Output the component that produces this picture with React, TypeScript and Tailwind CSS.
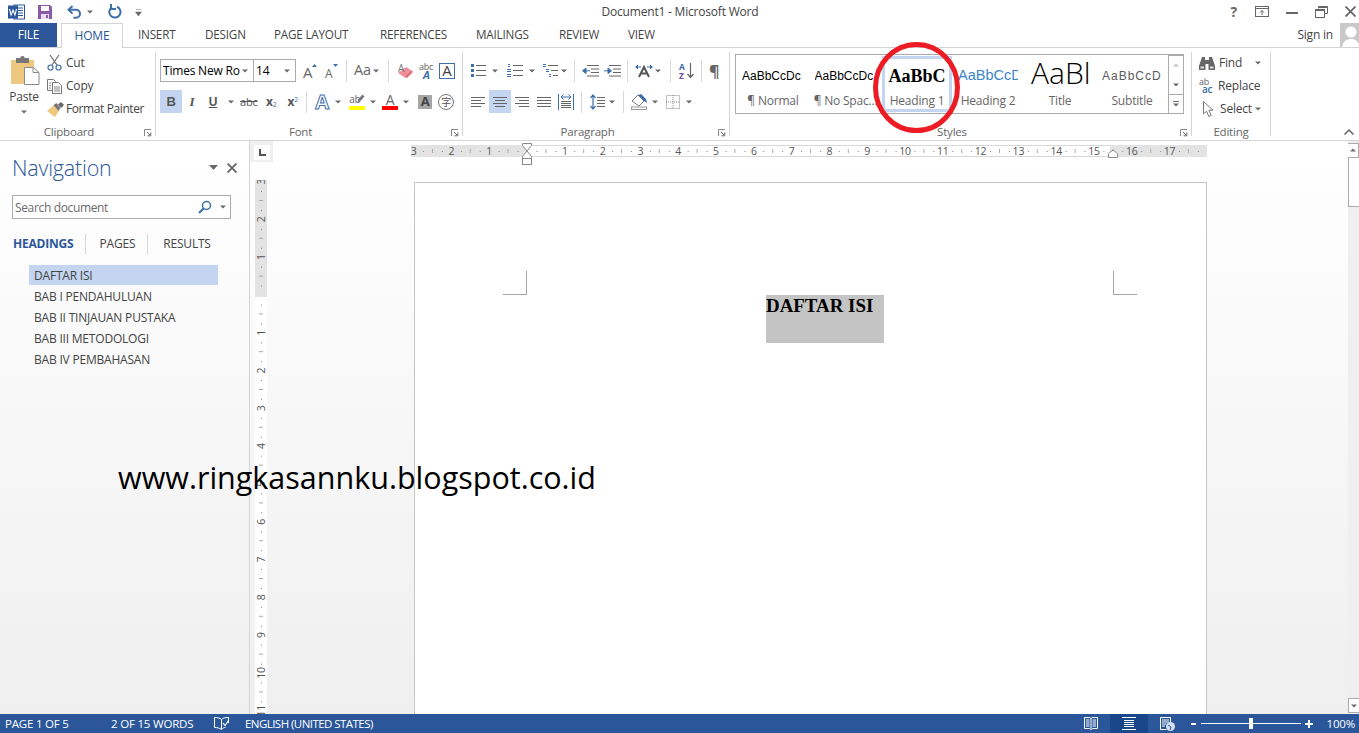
import React, { FC } from 'react';

const BLUE = '#2b579a';
const ICON = '#3e6fa8';
const GRAY = '#6a6a6a';

const Dd: FC<{ className?: string; color?: string }> = ({ className = '', color = GRAY }) => (
  <svg width="6" height="4" viewBox="0 0 6 4" className={`shrink-0 ${className}`}>
    <path d="M0 0.5h6L3 3.5z" fill={color} />
  </svg>
);

// little icon made of horizontal strokes: [x1, x2, y, colour?]
const Bars: FC<{ w: number; h: number; rows: (number | string)[][]; className?: string }> = ({ w, h, rows, className = '' }) => (
  <svg width={w} height={h} viewBox={`0 0 ${w} ${h}`} className={`shrink-0 ${className}`}>
    {rows.map((r, i) => (
      <line key={i} x1={r[0]} x2={r[1]} y1={Number(r[2]) + 0.5} y2={Number(r[2]) + 0.5} stroke={(r[3] as string) || '#666'} />
    ))}
  </svg>
);

const Launcher = () => (
  <svg width="8" height="8" viewBox="0 0 8 8" className="shrink-0">
    <path d="M0.5 7V0.5H7" fill="none" stroke="#8a8a8a" />
    <path d="M3 3l3 3M6.8 3.5v3.3H3.5" fill="none" stroke="#666" />
  </svg>
);

const Sep: FC<{ className?: string }> = ({ className = '' }) => <div className={`w-px h-[22px] bg-[#d8d8d8] shrink-0 ${className}`} />;

const Group: FC<{ label: string; className: string; children: React.ReactNode; launcher?: boolean }> = ({ label, className, children, launcher = true }) => (
  <div className={`flex flex-col h-[84px] border-r border-[#d4d4d4] shrink-0 ${className}`}>
    <div className="flex-1 min-h-0">{children}</div>
    <div className="h-[12px] -mb-[2px] flex items-center relative">
      <span className={`flex-1 text-center text-[#666] text-[11.5px] leading-[12px] ${launcher ? 'pr-[17px]' : ''}`}>{label}</span>
      {launcher && (
        <span className="absolute right-[3px] top-[3px]">
          <Launcher />
        </span>
      )}
    </div>
  </div>
);

const WordLogo = () => (
  <svg width="17" height="16" viewBox="0 0 17 16" className="shrink-0">
    <rect x="6" y="1" width="10.5" height="14" fill="#fff" stroke={BLUE} />
    <path d="M9 4h6M9 6.5h6M9 9h6M9 11.5h6" stroke={BLUE} />
    <rect x="0" y="1.5" width="10" height="13" fill={BLUE} />
    <path d="M1.5 5l1.6 6 1.9-5 1.9 5 1.6-6" fill="none" stroke="#fff" strokeWidth="1.1" />
  </svg>
);

const SaveIcon = () => (
  <svg width="14" height="14" viewBox="0 0 14 14" className="shrink-0">
    <path d="M0 0h12l2 2v12H0z" fill="#8a5aa8" />
    <rect x="3" y="1" width="8" height="5" fill="#fff" />
    <rect x="3" y="9" width="8" height="5" fill="#e9dff0" />
    <rect x="8" y="10" width="2" height="3" fill="#8a5aa8" />
  </svg>
);

const Undo = () => (
  <svg width="15" height="14" viewBox="0 0 15 14" className="shrink-0">
    <path d="M5.5 1L1.5 4.8l4 3.8" fill="none" stroke={ICON} strokeWidth="2" />
    <path d="M2 4.8h7a4 4 0 0 1 0 8H6.5" fill="none" stroke={ICON} strokeWidth="2" />
  </svg>
);

const Redo = () => (
  <svg width="14" height="15" viewBox="0 0 14 15" className="shrink-0">
    <path d="M4 3.2a5.6 5.6 0 1 0 5-0.4" fill="none" stroke={ICON} strokeWidth="2" />
    <path d="M3 0v5h5" fill="none" stroke={ICON} strokeWidth="2" />
  </svg>
);

const PasteIcon = () => (
  <svg width="29" height="29" viewBox="0 0 29 29" className="shrink-0 ml-[2px]">
    <rect x="0" y="4" width="23" height="24" rx="1" fill="#edc87e" />
    <rect x="5" y="2" width="13" height="5" fill="#777" />
    <rect x="9.500" y="0" width="4" height="4" rx="1.500" fill="#777" />
    <path d="M13.500 11.500h9l5.500 5v12h-14.500z" fill="#fff" stroke="#8a8a8a" />
    <path d="M22 11.500v5h6" fill="none" stroke="#8a8a8a" />
  </svg>
);

const CutIcon = () => (
  <svg width="15" height="16" viewBox="0 0 15 16" className="shrink-0">
    <path d="M3 0l7 10M12 0L5 10" stroke="#777" strokeWidth="1.300" fill="none" />
    <circle cx="3.500" cy="12.500" r="2.500" fill="none" stroke={ICON} strokeWidth="1.200" />
    <circle cx="11.500" cy="12.500" r="2.500" fill="none" stroke={ICON} strokeWidth="1.200" />
  </svg>
);

const CopyIcon = () => (
  <svg width="15" height="15" viewBox="0 0 15 15" className="shrink-0">
    <path d="M0.500 0.500h6l2 2v9h-8z" fill="#fff" stroke="#777" />
    <path d="M5.500 3.500h6l3 3v8h-9z" fill="#fff" stroke="#777" />
    <path d="M2 4h2M2 6.500h2M2 9h2M7 8h6M7 10h6M7 12h6" stroke="#888" />
  </svg>
);

const BrushIcon = () => (
  <svg width="17" height="15" viewBox="0 0 17 15" className="shrink-0">
    <path d="M0 9l7-6 5 6-4 6z" fill="#eec77f" />
    <path d="M6.500 3l3-2 4 5-2 3z" fill="#777" />
    <path d="M11 2.500l3-2.500 3 3-3 3z" fill="#666" />
  </svg>
);

const Eraser = () => (
  <svg width="17" height="16" viewBox="0 0 17 16" className="shrink-0 overflow-visible">
    <path d="M1 10l8-6 5 3-7 7z" fill="#ee8f9a" />
    <path d="M7 14l7-7 2 2-6 6z" fill="#e46f7d" />
    <text x="1" y="9" fontSize="10" fontFamily="Open Sans" fill="#777">A</text>
  </svg>
);

const BulletIcon = () => (
  <Bars w={15} h={14} rows={[[5, 15, 1], [5, 15, 6], [5, 15, 11], [0, 3, 0, '#3e6fa8'], [0, 3, 1, '#3e6fa8'], [0, 3, 2, '#3e6fa8'], [0, 3, 5, '#3e6fa8'], [0, 3, 6, '#3e6fa8'], [0, 3, 7, '#3e6fa8'], [0, 3, 10, '#3e6fa8'], [0, 3, 11, '#3e6fa8'], [0, 3, 12, '#3e6fa8']]} />
);

const NumberIcon = () => (
  <Bars w={16} h={14} rows={[[6, 16, 1], [6, 16, 6], [6, 16, 11], [1, 3, 0, '#3e6fa8'], [1, 3, 2, '#3e6fa8'], [0, 4, 5, '#3e6fa8'], [0, 4, 7, '#3e6fa8'], [0, 4, 10, '#3e6fa8'], [0, 4, 12, '#3e6fa8']]} />
);

const MultiIcon = () => (
  <Bars w={16} h={14} rows={[[5, 15, 1], [8, 15, 6], [10, 15, 11], [0, 3, 0, '#3e6fa8'], [0, 3, 2, '#3e6fa8'], [3, 6, 5, '#3e6fa8'], [3, 6, 7, '#3e6fa8'], [6, 8, 10, '#3e6fa8'], [6, 8, 12, '#3e6fa8']]} />
);

const Indent: FC<{ flip?: boolean }> = ({ flip }) => (
  <svg width="17" height="12" viewBox="0 0 17 12" className="shrink-0">
    <path d="M5 0.500h12M9 4h8M9 7.500h8M5 11h12" stroke="#666" />
    {flip ? <path d="M0 5.800h4V3l3.500 2.800L4 8.600V5.800" fill={ICON} stroke={ICON} /> : <path d="M8 5.800H4V3L0.500 5.800 4 8.600V5.800" fill={ICON} stroke={ICON} />}
  </svg>
);

const DirIcon = () => (
  <svg width="18" height="14" viewBox="0 0 18 14" className="shrink-0">
    <path d="M4 13L9 3l5 10M6 9.500h6" fill="none" stroke="#555" strokeWidth="2" />
    <path d="M0 3l3-2.500V5.500zM18 3l-3-2.500V5.500z" fill={ICON} />
    <path d="M3 3h3M12 3h3" stroke={ICON} />
  </svg>
);

const SortIcon = () => (
  <svg width="15" height="16" viewBox="0 0 15 16" className="shrink-0 overflow-visible">
    <text x="0" y="7" fontSize="8.500" fontWeight="700" fontFamily="Open Sans" fill={ICON}>A</text>
    <text x="0" y="15.500" fontSize="8.500" fontWeight="700" fontFamily="Open Sans" fill="#7a4ba0">Z</text>
    <path d="M11.500 0v14M8.500 11l3 3.500 3-3.500" fill="none" stroke="#666" strokeWidth="1.200" />
  </svg>
);

const Justify = () => (
  <svg width="16" height="16" viewBox="0 0 16 16" className="shrink-0">
    <path d="M0.500 0v16M15.500 0v16" stroke={ICON} />
    <path d="M3 7.500h10M3 9.500h10M3 11.500h10M3 13.500h10" stroke="#666" />
    <path d="M3 3h10" stroke={ICON} />
    <path d="M5.500 0.500L3 3l2.500 2.500M10.500 0.500L13 3l-2.500 2.500" fill="none" stroke={ICON} />
  </svg>
);

const LineSpacing = () => (
  <svg width="15" height="16" viewBox="0 0 15 16" className="shrink-0">
    <path d="M3 1v14M0.500 4L3 1l2.500 3M0.500 12L3 15l2.500-3" fill="none" stroke={ICON} strokeWidth="1.200" />
    <path d="M7 3.500h8M7 6.500h8M7 9.500h8M7 12.500h8" stroke="#666" />
  </svg>
);

const Shading = () => (
  <svg width="18" height="16" viewBox="0 0 18 16" className="shrink-0">
    <path d="M1 7l6-6 6 6-5 5z" fill="#fff" stroke="#777" />
    <path d="M7 1l3-1 5 5 1 4-3-2" fill={ICON} />
    <rect x="0.500" y="13" width="15" height="2.500" fill="#fff" stroke="#999" />
  </svg>
);

const Borders = () => (
  <svg width="14" height="14" viewBox="0 0 14 14" className="shrink-0">
    <rect x="0.500" y="0.500" width="13" height="13" fill="none" stroke="#888" strokeDasharray="1 1" />
    <path d="M7 0v14M0 7h14" stroke="#888" strokeDasharray="1 1" />
  </svg>
);

const Binoculars = () => (
  <svg width="16" height="14" viewBox="0 0 16 14" className="shrink-0">
    <path d="M3 1h3v3h4V1h3l3 9v4H9.500V8h-3v6H0v-4z" fill="#666" />
    <path d="M1.500 10.500h3.500v2H1.500zM11 10.500h3.500v2H11z" fill="#ddd" />
  </svg>
);

const Cursor = () => (
  <svg width="13" height="17" viewBox="0 0 13 17" className="shrink-0">
    <path d="M1.500 0.500v12.500l3-2.800 2.300 5.300 2.400-1-2.300-5.300h4.100z" fill="#fff" stroke="#777" />
  </svg>
);

const TitleBar = () => (
  <div className="h-[23px] flex items-center relative text-[#444] shrink-0">
    <div className="ml-[8px]"><WordLogo /></div>
    <div className="ml-[13px]"><SaveIcon /></div>
    <div className="ml-[15px]"><Undo /></div>
    <Dd className="ml-[5px]" />
    <div className="ml-[15px]"><Redo /></div>
    <svg width="7" height="8" viewBox="0 0 7 8" className="ml-[13px] mt-[2px]">
      <path d="M1 0.500h5M0.500 3h6L3.500 7z" fill={GRAY} stroke={GRAY} strokeWidth="0.500" />
    </svg>
    <span className="absolute left-[1px] right-0 text-center text-[12px] pointer-events-none">Document1 - Microsoft Word</span>
    <div className="ml-auto flex items-center">
      <span className="text-[14px] font-bold text-[#666] leading-none">?</span>
      <svg width="14" height="11" viewBox="0 0 14 11" className="ml-[18px]">
        <rect x="0.500" y="0.500" width="13" height="10" fill="none" stroke="#666" />
        <path d="M0 2.500h14M7 9V4.500M5 6.500l2-2 2 2" fill="none" stroke="#666" />
      </svg>
      <div className="w-[12px] h-[2px] bg-[#666] ml-[17px] mt-[2px]" />
      <svg width="13" height="12" viewBox="0 0 13 12" className="ml-[17px]">
        <path d="M3.500 2.500v-2h9v7h-3" fill="none" stroke="#666" />
        <path d="M3.500 1.500h9" stroke="#666" />
        <rect x="0.500" y="3.500" width="9" height="8" fill="#fff" stroke="#666" />
        <path d="M0.500 4.500h9" stroke="#666" />
      </svg>
      <svg width="11" height="11" viewBox="0 0 11 11" className="ml-[17px] mr-[3px]">
        <path d="M0.500 0.500l10 10M10.500 0.500l-10 10" stroke="#666" strokeWidth="1.800" />
      </svg>
    </div>
  </div>
);

const tabs = [
  { t: 'INSERT', c: 'ml-[15px] w-[37px]' },
  { t: 'DESIGN', c: 'ml-[30px] w-[40px]' },
  { t: 'PAGE LAYOUT', c: 'ml-[29px] w-[77px]' },
  { t: 'REFERENCES', c: 'ml-[29px] w-[67px]' },
  { t: 'MAILINGS', c: 'ml-[29px] w-[54px]' },
  { t: 'REVIEW', c: 'ml-[29px] w-[40px]' },
  { t: 'VIEW', c: 'ml-[29px] w-[27px]' },
];

const TabRow = () => (
  <div className="h-[25px] flex items-stretch text-[12px] text-[#444] shrink-0 relative z-10">
    <div className="w-[57px] h-[24px] bg-[#2b579a] text-white flex items-center justify-center">FILE</div>
    <div className="ml-[4px] w-[62px] bg-white border-x border-t border-[#d4d4d4] text-[#2b579a] flex items-center justify-center">HOME</div>
    {tabs.map((x) => (
      <div key={x.t} className={`h-[24px] flex items-center whitespace-nowrap text-[11.7px] ${x.c}`}>{x.t}</div>
    ))}
    <div className="ml-auto flex items-center h-[24px]">
      <span>Sign in</span>
      <div className="ml-[7px] w-[19px] h-[24px] bg-[#c9c9c9] overflow-hidden flex justify-center">
        <svg width="19" height="24" viewBox="0 0 19 24">
          <circle cx="11" cy="9" r="5.500" fill="#fff" />
          <path d="M2 24c1-6 5-8 9-8s7 2 8 6v2z" fill="#fff" />
        </svg>
      </div>
    </div>
  </div>
);

const Clipboard = () => (
  <Group label="Clipboard" className="w-[156px]">
    <div className="flex">
      <div className="w-[47px] flex flex-col items-center pt-[4px] pl-[1px]">
        <PasteIcon />
        <span className="mt-[4px] text-[12px] leading-[16px]">Paste</span>
        <Dd className="mt-[5px]" />
      </div>
      <div className="flex flex-col gap-[7px] pt-[3px] text-[12px] leading-[16px]">
        <div className="h-[16px] flex items-center gap-[4px]"><CutIcon /><span>Cut</span></div>
        <div className="h-[16px] flex items-center gap-[4px]"><CopyIcon /><span>Copy</span></div>
        <div className="h-[16px] flex items-center gap-[2px]"><BrushIcon /><span className="tracking-[-0.4px]">Format Painter</span></div>
      </div>
    </div>
  </Group>
);

const FontGroup = () => (
  <Group label="Font" className="w-[307px]">
    <div className="flex items-center pl-[4px] pt-[7px]">
      <div className="w-[94px] h-[23px] border border-[#ababab] flex items-center pl-[2px] pr-[5px] text-[12px] text-black">
        <span className="flex-1 whitespace-nowrap overflow-hidden">Times New Ro</span>
        <Dd />
      </div>
      <div className="w-[43px] h-[23px] -ml-px border border-[#ababab] flex items-center pl-[2px] pr-[5px] text-[12px] text-black">
        <span className="flex-1">14</span>
        <Dd />
      </div>
      <svg width="14" height="15" viewBox="0 0 14 15" className="ml-[7px] overflow-visible">
        <text x="0" y="15" fontSize="15" fontFamily="Open Sans" fill="#666">A</text>
        <path d="M9 4l2.500-3L14 4z" fill={ICON} />
      </svg>
      <svg width="14" height="15" viewBox="0 0 14 15" className="ml-[8px] overflow-visible">
        <text x="0" y="15" fontSize="12" fontFamily="Open Sans" fill="#666">A</text>
        <path d="M8 1l2.500 3L13 1z" fill={ICON} />
      </svg>
      <Sep className="ml-[7px]" />
      <span className="ml-[7px] text-[14.5px] text-[#666] leading-none">Aa</span>
      <Dd className="ml-[2px]" />
      <Sep className="ml-[9px]" />
      <div className="ml-[8px]"><Eraser /></div>
      <svg width="15" height="17" viewBox="0 0 15 17" className="ml-[5px] overflow-visible">
        <text x="0" y="7.500" fontSize="9" fontFamily="Open Sans" fill="#666">abc</text>
        <text x="4" y="16.500" fontSize="11" fontWeight="700" fontStyle="italic" fontFamily="Open Sans" fill={ICON}>A</text>
      </svg>
      <div className="ml-[5px] w-[16px] h-[16px] border border-[#3e6fa8] flex items-center justify-center text-[15px] text-[#444] leading-none">A</div>
    </div>
    <div className="flex items-center pl-[4px] mt-[8px] text-[#555] h-[23px]">
      <div className="w-[22px] h-[23px] bg-[#c3d5f0] flex items-center justify-center font-bold text-[13px] font-['Liberation_Sans',sans-serif]">B</div>
      <div className="w-[20px] flex justify-center italic font-bold text-[13px] font-['Liberation_Serif',serif]">I</div>
      <div className="w-[22px] flex justify-center underline font-bold text-[12px] font-['Liberation_Sans',sans-serif]">U</div>
      <Dd className="ml-[4px]" />
      <span className="ml-[6px] w-[18px] text-[11px] line-through leading-none">abc</span>
      <span className="ml-[8px] text-[12px] font-bold leading-none">x<sub className="text-[7px] font-normal text-[#3e6fa8]">2</sub></span>
      <span className="ml-[11px] text-[12px] font-bold leading-none">x<sup className="text-[7px] font-normal text-[#3e6fa8]">2</sup></span>
      <Sep className="ml-[8px]" />
      <span className="ml-[8px] w-[17px] text-[20px] font-bold text-[#fff] leading-none [-webkit-text-stroke:1px_#3e6fa8]">A</span>
      <Dd className="ml-[3px]" />
      <div className="ml-[8px] w-[16px] flex flex-col items-start leading-none relative">
        <span className="text-[10px] h-[12px] text-[#666]">ab</span>
        <svg width="8" height="9" viewBox="0 0 8 9" className="absolute right-0 top-0">
          <path d="M5.500 0.500l2 2-4.500 5-2.500 0.500 0.500-2.500z" fill="#777" />
        </svg>
        <span className="w-[16px] h-[4px] bg-[#ffff00]" />
      </div>
      <Dd className="ml-[5px]" />
      <div className="ml-[6px] w-[16px] flex flex-col items-center leading-none">
        <span className="text-[14px] h-[13px] text-[#666] leading-[13px]">A</span>
        <span className="w-[16px] h-[4px] bg-[#ff0000]" />
      </div>
      <Dd className="ml-[5px]" />
      <div className="ml-[9px] w-[14px] h-[14px] bg-[#a6a6a6] flex items-center justify-center font-bold text-[13px] text-[#444] leading-none">A</div>
      <div className="ml-[6px] w-[16px] h-[16px] rounded-full border border-[#777] flex items-center justify-center text-[10px] leading-none font-['Noto_Sans_CJK_SC',sans-serif]">字</div>
    </div>
  </Group>
);

const alignLeft = [[0, 14, 1], [0, 10, 4], [0, 14, 7], [0, 10, 10]];
const alignCenter = [[0, 14, 1], [2, 12, 4], [0, 14, 7], [2, 12, 10]];
const alignRight = [[0, 14, 1], [4, 14, 4], [0, 14, 7], [4, 14, 10]];
const alignFull = [[0, 14, 1], [0, 14, 4], [0, 14, 7], [0, 14, 10]];

const ParagraphGroup = () => (
  <Group label="Paragraph" className="w-[267px]">
    <div className="flex items-center pl-[8px] pt-[7px] h-[30px]">
      <BulletIcon />
      <Dd className="ml-[6px]" />
      <div className="ml-[9px]"><NumberIcon /></div>
      <Dd className="ml-[6px]" />
      <div className="ml-[8px]"><MultiIcon /></div>
      <Dd className="ml-[2px]" />
      <Sep className="ml-[7px]" />
      <div className="ml-[7px]"><Indent /></div>
      <div className="ml-[5px]"><Indent flip /></div>
      <Sep className="ml-[6px]" />
      <div className="ml-[7px]"><DirIcon /></div>
      <Dd className="ml-[2px]" />
      <Sep className="ml-[9px]" />
      <div className="ml-[8px]"><SortIcon /></div>
      <Sep className="ml-[7px]" />
      <span className="ml-[7px] text-[16px] font-bold text-[#666] leading-none">¶</span>
    </div>
    <div className="flex items-center pl-[8px] mt-[8px] h-[23px]">
      <Bars w={14} h={12} rows={alignLeft} />
      <div className="ml-[4px] w-[22px] h-[23px] bg-[#c3d5f0] flex items-center justify-center"><Bars w={14} h={12} rows={alignCenter} /></div>
      <Bars w={14} h={12} rows={alignRight} className="ml-[4px]" />
      <Bars w={14} h={12} rows={alignFull} className="ml-[8px]" />
      <div className="ml-[7px]"><Justify /></div>
      <Sep className="ml-[7px]" />
      <div className="ml-[8px]"><LineSpacing /></div>
      <Dd className="ml-[4px]" />
      <Sep className="ml-[8px]" />
      <div className="ml-[7px]"><Shading /></div>
      <Dd className="ml-[3px]" />
      <div className="ml-[8px]"><Borders /></div>
      <Dd className="ml-[6px]" />
    </div>
  </Group>
);

const StyleItem: FC<{ label: string; className: string; previewClass: string; preview: string }> = ({ label, className, previewClass, preview }) => (
  <div className={`flex flex-col items-center shrink-0 h-[56px] pt-[3px] ${className}`}>
    <div className={`h-[34px] flex items-center justify-center overflow-hidden whitespace-nowrap tracking-normal ${previewClass}`}>{preview}</div>
    <span className="text-[12px] text-[#666] leading-[16px] whitespace-nowrap">{label}</span>
  </div>
);

const StylesGroup = () => (
  <Group label="Styles" className="w-[462px]">
    <div className="ml-[5px] mt-[2px] w-[449px] h-[60px] border border-[#ababab] flex">
      <div className="flex-1 flex pl-[1px] pt-[1px]">
        <StyleItem label="¶ Normal" className="w-[72px]" previewClass="w-[60px] -translate-x-[1px] justify-start! text-[12px] text-black font-['Liberation_Sans',sans-serif]" preview="AaBbCcDc" />
        <StyleItem label="¶ No Spac..." className="w-[73px]" previewClass="w-[60px] -translate-x-[1px] justify-start! text-[12px] text-black font-['Liberation_Sans',sans-serif]" preview="AaBbCcDc" />
        <StyleItem label="Heading 1" className="w-[70px] h-[56px] border-[3px] border-[#c3d5f0] pt-0!" previewClass="text-[18px] font-bold text-black font-['Liberation_Serif',serif]" preview="AaBbC" />
        <StyleItem label="Heading 2" className="w-[72px]" previewClass="w-[60px] justify-start! text-[14.500px] text-[#3b87cc] font-['Liberation_Sans',sans-serif]" preview="AaBbCcD" />
        <StyleItem label="Title" className="w-[72px]" previewClass="w-[58px] justify-start! text-[30px] font-light text-black pb-[7px]" preview="AaBl" />
        <StyleItem label="Subtitle" className="w-[72px]" previewClass="w-[60px] justify-start! text-[12px] tracking-[1px]! text-[#5a5a5a] font-['Liberation_Sans',sans-serif]" preview="AaBbCcD" />
      </div>
      <div className="w-[15px] border-l border-[#ababab] flex flex-col">
        <div className="h-[20px] flex items-center justify-center border-b border-[#ababab] rotate-180"><Dd color="#c4c4c4" /></div>
        <div className="h-[20px] flex items-center justify-center border-b border-[#ababab]"><Dd /></div>
        <div className="flex-1 flex flex-col items-center justify-center gap-[1px]">
          <div className="w-[6px] h-px bg-[#6a6a6a]" />
          <Dd />
        </div>
      </div>
    </div>
  </Group>
);

const EditingGroup = () => (
  <Group label="Editing" className="w-[79px]" launcher={false}>
    <div className="flex flex-col gap-[7px] pl-[7px] pt-[3px] text-[12px] leading-[16px]">
      <div className="h-[16px] flex items-center gap-[4px]"><Binoculars /><span>Find</span><Dd className="ml-[9px]" /></div>
      <div className="h-[16px] flex items-center gap-[3px]">
        <svg width="16" height="16" viewBox="0 0 16 16" className="overflow-visible">
          <text x="0" y="7" fontSize="9" fontFamily="Open Sans" fill="#666">ab</text>
          <text x="3" y="15" fontSize="10" fontWeight="600" fontFamily="Open Sans" fill={ICON}>ac</text>
        </svg>
        <span>Replace</span>
      </div>
      <div className="h-[16px] flex items-center gap-[5px]"><div className="ml-[3px]"><Cursor /></div><span>Select</span><Dd className="-ml-[2px]" /></div>
    </div>
  </Group>
);

const Ribbon = () => (
  <div className="h-[94px] -mt-px bg-white border-t border-b border-[#d4d4d4] flex pt-[4px] text-[#444] shrink-0 relative">
    <Clipboard />
    <FontGroup />
    <ParagraphGroup />
    <StylesGroup />
    <EditingGroup />
    <svg width="10" height="6" viewBox="0 0 10 6" className="ml-auto mr-[5px] mt-[77px]">
      <path d="M0.500 5.500L5 1l4.500 4.500" fill="none" stroke="#666" strokeWidth="1.500" />
    </svg>
  </div>
);

const headings = ['DAFTAR ISI', 'BAB I PENDAHULUAN', 'BAB II TINJAUAN PUSTAKA', 'BAB III METODOLOGI', 'BAB IV PEMBAHASAN'];

const NavPanel = () => (
  <aside className="w-[250px] shrink-0 border-r border-[#d4d4d4] bg-linear-to-b from-white to-[#efefef] text-[#444]">
    <div className="h-[44px] flex items-center pl-[12px] pt-[9px]">
      <span className="text-[21.5px] font-light text-[#2b579a] leading-none">Navigation</span>
      <svg width="9" height="5" viewBox="0 0 9 5" className="ml-auto"><path d="M0 0h9L4.500 5z" fill={GRAY} /></svg>
      <svg width="10" height="10" viewBox="0 0 10 10" className="ml-[9px] mr-[12px]">
        <path d="M0.500 0.500l9 9M9.500 0.500l-9 9" stroke="#666" strokeWidth="1.800" />
      </svg>
    </div>
    <div className="ml-[12px] mt-[10px] w-[219px] h-[24px] border border-[#ababab] bg-white flex items-center pl-[2px] pr-[4px] text-[12px] text-[#6a6a6a]">
      <span className="flex-1 tracking-[-0.35px] pt-[1px]">Search document</span>
      <svg width="14" height="14" viewBox="0 0 14 14">
        <circle cx="8.500" cy="5.500" r="4" fill="#fff" stroke={ICON} strokeWidth="1.500" />
        <path d="M5.500 8.500L1 13" stroke={ICON} strokeWidth="2.200" />
      </svg>
      <Dd className="ml-[8px]" />
    </div>
    <div className="mt-[15px] h-[20px] ml-[13px] flex items-center text-[12px]">
      <span className="font-bold text-[#2b579a]">HEADINGS</span>
      <div className="w-px h-[20px] bg-[#d8d8d8] ml-[11px]" />
      <span className="ml-[14px]">PAGES</span>
      <div className="w-px h-[20px] bg-[#d8d8d8] ml-[12px]" />
      <span className="ml-[15px]">RESULTS</span>
    </div>
    <div className="mt-[11px] ml-[29px] w-[189px] flex flex-col gap-px text-[12px]">
      {headings.map((h, i) => (
        <div key={h} className={`h-[20px] pl-[5px] pt-[2px] flex items-center ${i === 0 ? 'bg-[#c3d5f0]' : ''}`}>{h}</div>
      ))}
    </div>
  </aside>
);

const HRuler = () => {
  const o = 116;
  const cm = 37.8;
  const items: { x: number; n: number }[] = [];
  for (let n = -3; n <= 17; n++) if (n !== 0) items.push({ x: o + n * cm, n: Math.abs(n) });
  const ticks: number[] = [];
  for (let q = -12; q <= 72; q++) if (q % 4 !== 0) ticks.push(q);
  return (
    <svg width="796" height="22" viewBox="0 0 796 22" className="shrink-0 ml-[138px] mt-[2px]">
      <rect x="0" y="2" width="796" height="12" fill="#e3e3e3" />
      <rect x="116" y="2" width="583" height="12" fill="#fff" />
      <path d="M116 2.500h583M116 13.500h583" stroke="#d8d8d8" />
      {ticks.map((q) => {
        const x = o + (q * cm) / 4;
        return q % 2 === 0 ? (
          <line key={q} x1={x} x2={x} y1="6" y2="10" stroke="#aaa" />
        ) : (
          <rect key={q} x={x} y="8" width="1" height="1" fill="#888" />
        );
      })}
      {items.map((t) => (
        <text key={t.x} x={t.x} y="12" fontSize="10.500" textAnchor="middle" fontFamily="Open Sans" fill="#555">
          {t.n}
        </text>
      ))}
      <path d="M111.500 0.500h9v2l-4.500 5.500-4.500-5.500zM111.500 15.500v-2l4.500-5.500 4.500 5.500v2z" fill="#fff" stroke="#8a8a8a" />
      <rect x="111.500" y="15.500" width="9" height="6" fill="#fff" stroke="#8a8a8a" />
      <path d="M697.500 14.500v-4l4.500-3.500 4.500 3.500v4z" fill="#fff" stroke="#8a8a8a" />
    </svg>
  );
};

const VRuler = () => {
  const o = 115;
  const cm = 37.8;
  const nums: number[] = [-3, -2, -1, 1, 2, 3, 4, 5, 6, 7, 8, 9, 10, 11];
  const ticks: number[] = [];
  for (let q = -11; q <= 46; q++) if (q % 4 !== 0) ticks.push(q);
  return (
    <svg width="12" height="534" viewBox="0 0 12 534" className="shrink-0 ml-[5px] mt-[15px]">
      <rect x="0" y="0" width="12" height="117" fill="#e3e3e3" />
      <rect x="0" y="117" width="12" height="417" fill="#fff" />
      {ticks.map((q) => {
        const y = o + (q * cm) / 4;
        return q % 2 === 0 ? (
          <line key={q} x1="4" x2="8" y1={y} y2={y} stroke="#aaa" />
        ) : (
          <rect key={q} x="6" y={y} width="1" height="1" fill="#888" />
        );
      })}
      {nums.map((n) => {
        const y = o + n * cm;
        return (
          <text key={n} x="0" y="0" transform={`translate(10 ${y}) rotate(-90)`} fontSize="10.500" textAnchor="middle" fontFamily="Open Sans" fill="#555">
            {Math.abs(n)}
          </text>
        );
      })}
    </svg>
  );
};

const Page = () => (
  <div className="ml-[147px] mt-[17px] w-[793px] border-x border-t border-[#c6c6c6] bg-white">
    <div className="mt-[88px] pl-[88px] pr-[69px] flex justify-between">
      <div className="w-[24px] h-[24px] border-r border-b border-[#a6a6a6]" />
      <div className="w-[24px] h-[24px] border-l border-b border-[#a6a6a6]" />
    </div>
    <div className="ml-[351px] w-[118px] h-[48px] bg-[#c4c4c4] text-black font-bold text-[18.9px] leading-[21px] tracking-normal font-['Liberation_Serif',serif]">DAFTAR ISI</div>
  </div>
);

const ScrollBar = () => (
  <div className="w-[11px] shrink-0 bg-[#efefef] flex flex-col pt-[2px]">
    <div className="h-[15px] bg-white border border-[#ababab] border-r-0 flex items-center justify-center rotate-180"><Dd /></div>
    <div className="h-[50px] -mt-px bg-white border border-[#ababab] border-r-0" />
    <div className="mt-auto h-[15px] mb-px bg-white border border-[#ababab] border-r-0 flex items-center justify-center"><Dd /></div>
  </div>
);

const DocArea = () => (
  <section className="flex-1 flex bg-linear-to-b from-white to-[#efefef] min-w-0 overflow-hidden">
    <div className="flex-1 min-w-0 flex flex-col">
      <div className="h-[24px] flex items-start shrink-0">
        <div className="w-[23px] h-[21px] bg-[#efefef] pl-[4px] pt-[4px] shrink-0">
          <div className="w-[16px] h-[15px] bg-white flex items-center justify-center">
            <div className="w-[7px] h-[7px] border-l-2 border-b-2 border-[#555]" />
          </div>
        </div>
        <HRuler />
      </div>
      <div className="flex flex-1 min-h-0">
        <VRuler />
        <Page />
      </div>
    </div>
    <ScrollBar />
  </section>
);

const StatusBar = () => (
  <div className="h-[19px] bg-[#2b579a] text-white text-[11.500px] flex items-center shrink-0">
    <span className="ml-[5px] w-[106px]">PAGE 1 OF 5</span>
    <span className="w-[103px]">2 OF 15 WORDS</span>
    <svg width="15" height="13" viewBox="0 0 15 13">
      <path d="M7.500 2.500C6 1 3 0.500 0.500 0.500v10c2.500 0 5 .5 7 2 1-1 1.500-1.500 3-2h1" fill="none" stroke="#fff" />
      <path d="M7.500 2.500V12M7.500 2.500C9 1 11 0.500 14.500 0.500V6" fill="none" stroke="#fff" />
      <path d="M9 6l2 2.500 3.500-5" fill="none" stroke="#fff" strokeWidth="1.200" />
    </svg>
    <span className="ml-[16px] tracking-[-0.55px]">ENGLISH (UNITED STATES)</span>
    <div className="ml-auto flex items-center h-full">
      <svg width="14" height="13" viewBox="0 0 14 13">
        <path d="M0.500 0.500h5l1.500 1 1.500-1h5v11h-5l-1.500 1-1.500-1h-5zM7 1.500v10" fill="none" stroke="#fff" />
        <path d="M2 3h3.500M2 5h3.500M2 7h3.500M2 9h3.500M8.500 3H12M8.500 5H12M8.500 7H12M8.500 9H12" stroke="#fff" />
      </svg>
      <div className="ml-[12px] w-[38px] h-full bg-[#19478a] flex items-center justify-center">
        <Bars w={14} h={13} rows={[[0, 14, 0, '#fff'], [0, 14, 12, '#fff'], [2, 12, 3, '#fff'], [2, 12, 5, '#fff'], [2, 12, 7, '#fff'], [2, 12, 9, '#fff']]} />
      </div>
      <svg width="15" height="14" viewBox="0 0 15 14" className="ml-[12px]">
        <path d="M0.500 0.500h10v6M0.500 0.500v12h6" fill="none" stroke="#fff" />
        <path d="M2 3h7M2 5h7M2 7h4M2 9h3" stroke="#fff" />
        <circle cx="10.500" cy="9.500" r="4.500" fill="#d5e0f0" />
        <path d="M8 8l3 2-1 3" fill="none" stroke="#2b579a" />
      </svg>
      <div className="ml-[16px] w-[5px] h-[2px] bg-white" />
      <div className="ml-[5px] w-[100px] h-px bg-white flex items-center justify-center">
        <div className="w-[4px] h-[11px] bg-white" />
      </div>
      <svg width="8" height="8" viewBox="0 0 8 8" className="ml-[4px]"><path d="M4 0v8M0 4h8" stroke="#fff" strokeWidth="2" /></svg>
      <span className="ml-[14px] mr-[4px]">100%</span>
    </div>
  </div>
);

export default function App() {
  return (
    <div className="w-[1359px] h-[733px] relative overflow-hidden bg-white flex flex-col font-['Open_Sans',sans-serif] tracking-[-0.2px]">
      <TitleBar />
      <TabRow />
      <Ribbon />
      <main className="flex-1 flex min-h-0">
        <NavPanel />
        <DocArea />
      </main>
      <StatusBar />
      <span className="absolute left-[118px] top-[455px] text-[30.5px] leading-[44px] tracking-normal text-black whitespace-nowrap">www.ringkasannku.blogspot.co.id</span>
      <svg width="94" height="96" viewBox="0 0 94 96" className="absolute left-[870px] top-[40px] pointer-events-none">
        <ellipse cx="46.500" cy="47.500" rx="41" ry="43" fill="none" stroke="#ed1c24" strokeWidth="5" />
      </svg>
    </div>
  );
}
